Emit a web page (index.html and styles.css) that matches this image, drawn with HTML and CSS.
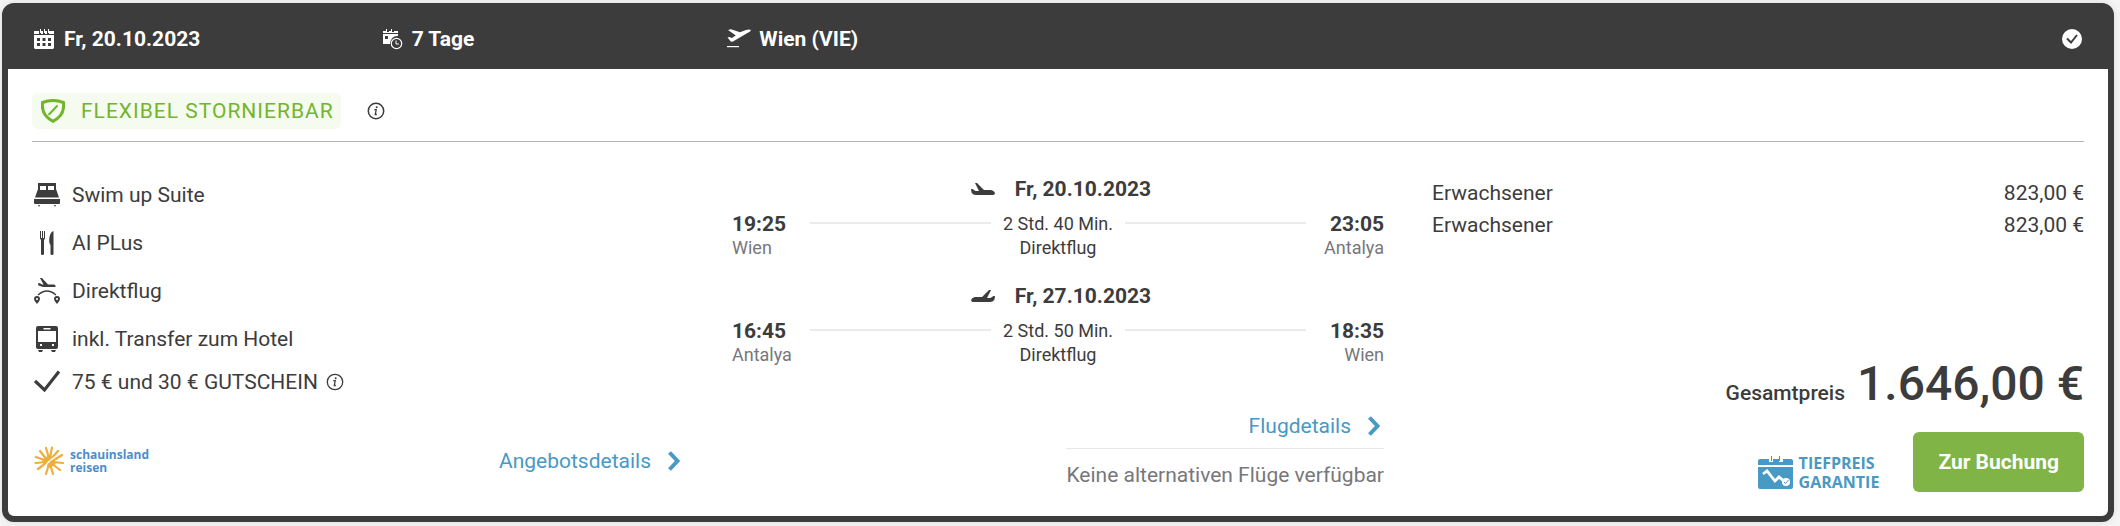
FILE: index.html
```html
<!DOCTYPE html>
<html lang="de">
<head>
    <meta charset="UTF-8">
    <title>Angebot</title>
    <link rel="stylesheet" href="styles.css">
</head>
<body>
<article class="offer">
    <header class="offer-head">
        <div class="head-item">
            <svg class="icon-head" viewBox="0 0 22 24" fill="#fff">
                <path d="M1 4h5v3h2V4h2v3h2V4h2v3h2V4h5v3H1z"/>
                <path d="M7 2h1v4H7zM11 2h1v4h-1zM15 2h1v4h-1z"/>
                <path fill-rule="evenodd" d="M1 8h20v13l-1 1H2l-1-1zM4 11v3h3v-3zM9.500 11v3h3v-3zM15 11v3h3v-3zM4 16v3h3v-3zM9.500 16v3h3v-3zM15 16v3h3v-3z"/>
            </svg>
            <span>Fr, 20.10.2023</span>
        </div>
        <div class="head-item">
            <svg class="icon-head" viewBox="0 0 22 24" fill="#fff">
                <path d="M2 4h3V2h1v3h2V4h2V2h1v3h2V4h4v2H2z"/>
                <path fill-rule="evenodd" d="M2 7h15v2q-7-.5-8 8H2zM4 9v3h3V9z"/>
                <circle cx="15.500" cy="16.500" r="5.200" fill="none" stroke="#fff" stroke-width="1.200"/>
                <path d="M15 13.500v3.500h3" fill="none" stroke="#fff"/>
            </svg>
            <span>7 Tage</span>
        </div>
        <div class="head-item">
            <svg class="icon-head" viewBox="0 0 24 24" fill="#fff">
                <path d="M1 3l3-.7 9 3 6-2.300q4-1 5 .2-.5 1.700-4 3L6 14.500l-2 .3L.500 10.500l1.800-.6 2.500 1.200 4-2.600z"/>
                <path d="M0 19h12v1.200H0z"/>
            </svg>
            <span>Wien (VIE)</span>
        </div>
        <svg class="icon-selected" viewBox="0 0 20 20">
            <circle cx="10" cy="10" r="10" fill="#fff"/>
            <path d="M5 9.500l4 4 6-7.500" fill="none" stroke="#3c3c3c" stroke-width="2"/>
        </svg>
    </header>

    <div class="offer-body">
        <div class="flex-row">
            <span class="flex-badge">
                <svg class="icon-shield" viewBox="0 0 24 24" fill="none" stroke="#72b52d">
                    <path stroke-width="3" d="M1.500 3.500Q12-.5 22.500 3.500 24 16.500 12 22.300 0 16.500 1.500 3.500z"/>
                    <path stroke-width="2" d="M7.500 16L16.500 6.500"/>
                </svg>
                FLEXIBEL STORNIERBAR
            </span>
            <svg class="icon-info" viewBox="0 0 18 18">
                <circle cx="9" cy="9" r="7.700" fill="none" stroke="#3c3c3c" stroke-width="1.500"/>
                <path d="M7.300 7.700h1.900L8.300 12.500h1.500" fill="none" stroke="#3c3c3c" stroke-width="1.300"/>
                <circle cx="9.700" cy="5.200" r="1" fill="#3c3c3c"/>
            </svg>
        </div>

        <div class="columns">
            <section class="col">
                <ul class="features">
                    <li>
                        <svg class="icon" viewBox="0 0 26 26" fill="#3c3c3c">
                            <path fill-rule="evenodd" d="M4 1h18v6l3 8.500H1L4 7zM6 4v4h6V4zM14 4v4h6V4z"/>
                            <path d="M0 17h26v4q0 1-1 1H1q-1 0-1-1zM4 23h2l-1 2zM20 23h2l-1 2z"/>
                        </svg>
                        <span>Swim up Suite</span>
                    </li>
                    <li>
                        <svg class="icon" viewBox="0 0 26 26" fill="#3c3c3c">
                            <path d="M6 1h1v7h1V1h1v7h1V1h1v7q0 1-1 2v14q0 1-1.500 1T7 24V10q-1-1-1-2z"/>
                            <path d="M19.500 1v23q0 1-1.500 1t-1.500-1v-9q-2-3-1-8 1-5 4-6z"/>
                        </svg>
                        <span>AI PLus</span>
                    </li>
                    <li>
                        <svg class="icon" viewBox="0 0 26 26" fill="#3c3c3c">
                            <path d="M6 0l2 0 6 6.500h6q2 .3 1.500 2.500H9L4.500 7.500 4 5l2 .2 2 1.300h1.500z"/>
                            <path d="M4 17q9-8 18 0" fill="none" stroke="#3c3c3c" stroke-width="1.200"/>
                            <path fill-rule="evenodd" d="M3 18a3 3 0 0 1 3 3q0 2-3 5-3-3-3-5a3 3 0 0 1 3-3zM3 20a1 1 0 1 0 .01 0zM23 18a3 3 0 0 1 3 3q0 2-3 5-3-3-3-5a3 3 0 0 1 3-3zM23 20a1 1 0 1 0 .01 0z"/>
                        </svg>
                        <span>Direktflug</span>
                    </li>
                    <li>
                        <svg class="icon" viewBox="0 0 26 26" fill="#3c3c3c">
                            <path fill-rule="evenodd" d="M4 0h18q2 0 2 2v19q0 2-2 2H4q-2 0-2-2V2q0-2 2-2zM9.500 2v1.500h7V2zM4 5v11h18V5zM6 18v2h2v-2zM18 18v2h2v-2z"/>
                            <path d="M4 24h5l-1 2H5zM17 24h5l-1 2h-3z"/>
                        </svg>
                        <span>inkl. Transfer zum Hotel</span>
                    </li>
                    <li class="voucher">
                        <svg class="icon" viewBox="0 0 26 26">
                            <path d="M1 12l9.500 9L25 2.500" fill="none" stroke="#3c3c3c" stroke-width="3.200"/>
                        </svg>
                        <span>75 € und 30 € GUTSCHEIN</span>
                        <svg class="icon-info" viewBox="0 0 18 18">
                            <circle cx="9" cy="9" r="7.700" fill="none" stroke="#3c3c3c" stroke-width="1.300"/>
                            <path d="M7.300 7.700h1.900L8.300 12.500h1.500" fill="none" stroke="#3c3c3c" stroke-width="1.300"/>
                            <circle cx="9.700" cy="5.200" r="1" fill="#3c3c3c"/>
                        </svg>
                    </li>
                </ul>
                <div class="operator-row">
                    <div class="operator">
                        <svg class="icon-sun" viewBox="0 0 30 30" fill="none" stroke="#edae3b" stroke-width="2.200" stroke-linecap="round">
                            <path d="M13 15L2 11M12 16L1.500 17M12 17L4 23M13 14L6 5M15 12L12 2M16 12L18 1.500M16 14L24 5M17 16L28 9M18 16L29 17M17 17L26 24M16 18L19 28M15 18L12 28"/>
                            <path stroke-width="5" d="M11 15l4-3M16 19l3-2"/>
                            <path stroke="#fff" stroke-width="1.300" d="M10 22Q13 16 21 11"/>
                        </svg>
                        <span>schauinsland<br>reisen</span>
                    </div>
                    <a class="link" href="#">Angebotsdetails
                        <svg class="chevron" viewBox="0 0 12 20"><path d="M1.500 1.500L9.500 10 1.500 18.500"/></svg>
                    </a>
                </div>
            </section>

            <section class="col">
                <div class="flight">
                    <div class="flight-date">
                        <svg class="icon-flight" viewBox="0 0 24 14" fill="#3c3c3c">
                            <path d="M4 1h2l7 7h7q3 .5 4 3-.3 2-2 2H5Q2 13 .5 10.500L0 7h1.500l3 2H8z"/>
                        </svg>
                        <span>Fr, 20.10.2023</span>
                    </div>
                    <div class="leg">
                        <div class="stop"><b>19:25</b><small>Wien</small></div>
                        <i class="track"></i>
                        <div class="duration">2 Std. 40 Min.<br>Direktflug</div>
                        <i class="track"></i>
                        <div class="stop stop-end"><b>23:05</b><small>Antalya</small></div>
                    </div>
                </div>
                <div class="flight">
                    <div class="flight-date">
                        <svg class="icon-flight" viewBox="0 0 24 14" fill="#3c3c3c">
                            <path d="M20 1h-2l-7 7H4Q1 8.500 0 11q.3 2 2 2h17q3 0 4.500-2.500L24 7h-1.500l-3 2H16z"/>
                        </svg>
                        <span>Fr, 27.10.2023</span>
                    </div>
                    <div class="leg">
                        <div class="stop"><b>16:45</b><small>Antalya</small></div>
                        <i class="track"></i>
                        <div class="duration">2 Std. 50 Min.<br>Direktflug</div>
                        <i class="track"></i>
                        <div class="stop stop-end"><b>18:35</b><small>Wien</small></div>
                    </div>
                </div>
                <div class="flight-more">
                    <a class="link" href="#">Flugdetails
                        <svg class="chevron" viewBox="0 0 12 20"><path d="M1.500 1.500L9.500 10 1.500 18.500"/></svg>
                    </a>
                    <p class="no-flights">Keine alternativen Flüge verfügbar</p>
                </div>
            </section>

            <section class="col">
                <dl class="prices">
                    <div><dt>Erwachsener</dt><dd>823,00 €</dd></div>
                    <div><dt>Erwachsener</dt><dd>823,00 €</dd></div>
                </dl>
                <div class="total">
                    <span>Gesamtpreis</span>
                    <strong>1.646,00 €</strong>
                </div>
                <div class="booking">
                    <div class="guarantee">
                        <svg class="icon-guarantee" viewBox="0 0 35 34">
                            <path fill="#4899c4" d="M2 3h9v3h4V3h6v3h4V3h8q2 0 2 2v4H0V5q0-2 2-2zM13 0h1v5h-1zM21 0h1v5h-1zM0 11h35v20q0 2-2 2H2q-2 0-2-2z"/>
                            <path d="M5 18l4-3 8 10 4-4 7 6" fill="none" stroke="#fff" stroke-width="2.800"/>
                            <circle cx="28" cy="26" r="4" fill="#fff"/>
                            <path d="M26 26l1.500 1.500 3-3.500" fill="none" stroke="#4899c4"/>
                        </svg>
                        <span>TIEFPREIS<br>GARANTIE</span>
                    </div>
                    <button class="book" type="button">Zur Buchung</button>
                </div>
            </section>
        </div>
    </div>
</article>
</body>
</html>
```
FILE: styles.css
```css
* {
    box-sizing: border-box;
    margin: 0;
    padding: 0;
}

body {
    padding: 3px 6px 4px 2px;
    background: #f5f5f5;
    color: #3c3c3c;
    font-family: Roboto, "Liberation Sans", sans-serif;
    font-size: 21px;
    line-height: 32px;
}

ul {
    list-style: none;
}

svg {
    flex: none;
}

.offer {
    border: 6px solid #3c3c3c;
    border-radius: 12px;
    background: #fff;
    box-shadow: 0 0 8px rgba(0, 0, 0, .1);
}

.offer-head {
    display: grid;
    grid-template-columns: 348fr 348fr 1336fr 20px;
    align-items: center;
    height: 60px;
    padding: 0 26px 0 24px;
    background: #3c3c3c;
    color: #fff;
    font-weight: 700;
}

.head-item {
    display: flex;
    align-items: center;
    gap: 8px;
}

.icon-head {
    width: 24px;
    height: 24px;
}

.icon-selected {
    width: 20px;
    height: 20px;
}

.offer-body {
    padding: 24px;
}

.flex-row {
    display: flex;
    align-items: center;
    gap: 26px;
    padding-bottom: 12px;
    border-bottom: 1px solid #b4b4b4;
}

.flex-badge {
    display: flex;
    align-items: center;
    gap: 16px;
    height: 36px;
    padding: 0 7px 0 9px;
    border-radius: 6px;
    background: #f5fbef;
    color: #72b52d;
    letter-spacing: 1px;
}

.icon-shield {
    width: 24px;
    height: 24px;
}

.icon-info {
    width: 18px;
    height: 18px;
}

.columns {
    display: grid;
    grid-template-columns: repeat(3, 1fr);
    gap: 48px;
    padding-top: 29px;
}

.col {
    display: flex;
    flex-direction: column;
}

/* Leistungen */
.features li {
    display: flex;
    align-items: center;
    gap: 12px;
    height: 48px;
    padding-left: 2px;
}

.features .voucher {
    gap: 8px;
    height: 38px;
}

.voucher .icon {
    margin-right: 4px;
}

.icon {
    width: 26px;
    height: 26px;
}

.operator-row {
    display: flex;
    align-items: center;
    justify-content: space-between;
    margin-top: auto;
    padding: 0 4px 15px 2px;
}

.operator {
    display: flex;
    align-items: center;
    gap: 6px;
    color: #4a8ed0;
    font-family: "Open Sans", sans-serif;
    font-size: 12px;
    font-weight: 700;
    line-height: 13px;
}

.icon-sun {
    width: 30px;
    height: 30px;
}

.link {
    display: flex;
    align-items: center;
    gap: 17px;
    color: #4899c4;
    text-decoration: none;
}

.chevron {
    width: 12px;
    height: 20px;
    fill: none;
    stroke: #4899c4;
    stroke-width: 4;
}

/* Flug */
.flight {
    margin-bottom: 18px;
}

.flight-date {
    display: flex;
    align-items: center;
    justify-content: center;
    gap: 20px;
    height: 36px;
    margin-bottom: 5px;
    padding-left: 6px;
    font-weight: 700;
}

.icon-flight {
    width: 24px;
    height: 14px;
}

.leg {
    display: flex;
    font-size: 18px;
    line-height: 24px;
}

.stop {
    display: flex;
    flex-direction: column;
    width: 78px;
}

.stop b {
    font-size: 21px;
}

.stop small {
    color: #77777c;
    font-size: 18px;
}

.stop-end {
    align-items: flex-end;
}

.track {
    flex: 1;
    height: 2px;
    margin-top: 10px;
    background: #ebebeb;
}

.duration {
    padding: 0 12px;
    text-align: center;
}

.flight-more {
    display: flex;
    flex-direction: column;
    align-items: flex-end;
    margin-top: 25px;
}

.flight-more .link {
    height: 38px;
    padding: 0 4px 6px 0;
}

.no-flights {
    padding: 10px 0 1px;
    border-top: 1px solid #e6e6e6;
    color: #77777c;
}

/* Preis */
.prices {
    padding-top: 6px;
}

.prices div {
    display: flex;
    justify-content: space-between;
}

.total {
    display: flex;
    align-items: baseline;
    justify-content: flex-end;
    gap: 12px;
    margin-top: auto;
    font-weight: 500;
}

.total strong {
    font-size: 48px;
    font-weight: 500;
    line-height: 60px;
}

.booking {
    display: flex;
    align-items: flex-end;
    justify-content: flex-end;
    gap: 34px;
    margin-top: 18px;
}

.guarantee {
    display: flex;
    align-items: center;
    gap: 6px;
    color: #4899c4;
    font-family: "Open Sans", sans-serif;
    font-size: 16px;
    font-weight: 700;
    line-height: 19px;
}

.icon-guarantee {
    width: 35px;
    height: 34px;
}

.book {
    height: 60px;
    padding: 0 25px;
    border: 0;
    border-radius: 6px;
    background: #80b446;
    color: #fff;
    font: 700 21px Roboto, "Liberation Sans", sans-serif;
}
```
